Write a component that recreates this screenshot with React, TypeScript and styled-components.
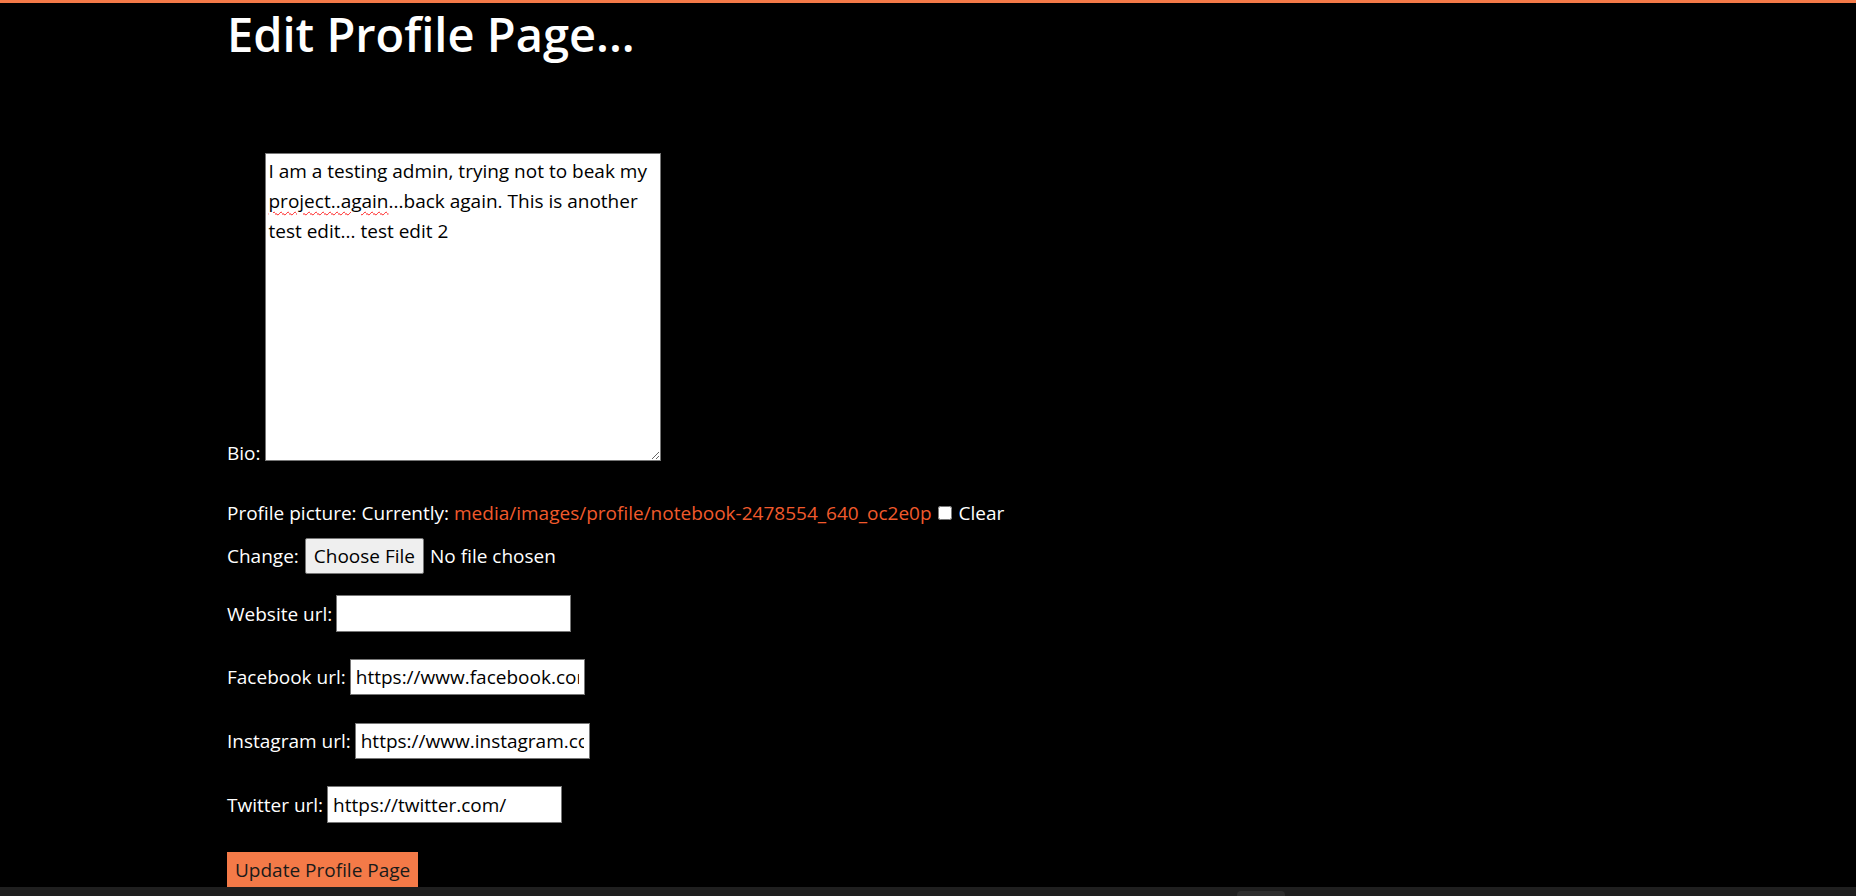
import React from "react";
import styled, { createGlobalStyle } from "styled-components";

const FONT = `"Open Sans", "Noto Sans", "Liberation Sans", sans-serif`;

const GlobalStyle = createGlobalStyle`
  html, body {
    margin: 0;
    padding: 0;
    background: #000;
  }
  body {
    font-family: ${FONT};
    color: #fff;
    font-size: 19px;
  }
  * { box-sizing: border-box; }
`;

const Page = styled.div`
  height: 100vh;
  display: flex;
  flex-direction: column;
  background: #000;
  overflow: hidden;
`;

const TopBar = styled.div`
  height: 3px;
  flex: none;
  background: #f47a48;
`;

const Main = styled.main`
  flex: 1;
  min-height: 0;
  overflow: hidden;
  padding-left: 227px;
`;

const Title = styled.h1`
  margin: 1px 0 0;
  font-size: 47px;
  line-height: 60px;
  font-weight: 600;
  color: #fff;
`;

const Form = styled.form`
  display: flex;
  flex-direction: column;
  align-items: flex-start;
`;

const Row = styled.div<{ $top: number; $align?: string; $gap?: number }>`
  display: flex;
  align-items: ${(p) => p.$align ?? "center"};
  gap: ${(p) => p.$gap ?? 4}px;
  margin-top: ${(p) => p.$top}px;
  line-height: 26px;
  white-space: nowrap;
`;

const Label = styled.label`
  color: #fff;
  line-height: 26px;
`;

const BioLabel = styled(Label)`
  line-height: 20px;
  margin-bottom: -2px;
`;

const BioBox = styled.div`
  width: 396px;
  height: 308px;
  background: #fff;
  color: #000;
  border: 1px solid #767676;
  padding: 2px 3px;
  font-size: 19px;
  line-height: 30px;
  resize: both;
  overflow: auto;
  white-space: normal;
  text-align: left;
  &::-webkit-scrollbar { display: none; }
`;

const Misspelled = styled.span`
  text-decoration: underline wavy #ff1a1a;
  text-decoration-thickness: 1px;
  text-underline-offset: 3px;
`;

const FileLink = styled.a`
  color: #f15a2c;
  text-decoration: none;
`;

const Check = styled.input`
  width: 14px;
  height: 14px;
  margin: 0 1px 0 0;
`;

const Inline = styled.span`
  display: inline-flex;
  align-items: center;
  gap: 6px;
`;

const FileButton = styled.button`
  height: 36px;
  padding: 0 8px;
  background: #efefef;
  color: #000;
  border: 1px solid #767676;
  border-radius: 2px;
  font-family: ${FONT};
  font-size: 19px;
  line-height: 26px;
`;

const TextInput = styled.input<{ $h?: number }>`
  width: 235px;
  height: ${(p) => p.$h ?? 36}px;
  padding: 0 5px;
  border: 1px solid #767676;
  border-radius: 0;
  background: #fff;
  color: #000;
  font-family: ${FONT};
  font-size: 19px;
  outline: none;
`;

const SubmitButton = styled.button`
  height: 36px;
  padding: 0 8px;
  background: #f47a48;
  color: #1a1a1a;
  border: none;
  border-radius: 0;
  font-family: ${FONT};
  font-size: 19px;
  line-height: 26px;
`;

const ScrollTrack = styled.div`
  height: 9px;
  flex: none;
  background: #1f1f1f;
  display: flex;
  align-items: flex-end;
  padding-left: 1237px;
`;

const ScrollThumb = styled.div`
  width: 48px;
  height: 5px;
  background: #2e2e2e;
  border-radius: 4px 4px 0 0;
`;

export default function App() {
  return (
    <>
      <GlobalStyle />
      <Page>
        <TopBar />
        <Main>
          <Title>Edit Profile Page...</Title>
          <Form onSubmit={(e) => e.preventDefault()}>
            <Row $top={89} $align="flex-end">
              <BioLabel htmlFor="bio">Bio:</BioLabel>
              <BioBox id="bio" role="textbox" aria-multiline="true">
                I am a testing admin, trying not to beak my{" "}
                <Misspelled>project..again</Misspelled>...back again. This is
                another test edit... test edit 2
              </BioBox>
            </Row>
            <Row $top={39} $gap={6}>
              <Label>
                Profile picture: Currently:{" "}
                <FileLink href="#">
                  media/images/profile/notebook-2478554_640_oc2e0p
                </FileLink>
              </Label>
              <Inline>
                <Check type="checkbox" id="clear" />
                <Label htmlFor="clear">Clear</Label>
              </Inline>
            </Row>
            <Row $top={12} $gap={6}>
              <Label>Change:</Label>
              <FileButton type="button">Choose File</FileButton>
              <span>No file chosen</span>
            </Row>
            <Row $top={21}>
              <Label htmlFor="website">Website url:</Label>
              <TextInput id="website" type="text" $h={37} defaultValue="" />
            </Row>
            <Row $top={27}>
              <Label htmlFor="facebook">Facebook url:</Label>
              <TextInput id="facebook" type="text" defaultValue="https://www.facebook.com/" />
            </Row>
            <Row $top={28}>
              <Label htmlFor="instagram">Instagram url:</Label>
              <TextInput id="instagram" type="text" defaultValue="https://www.instagram.com/" />
            </Row>
            <Row $top={27}>
              <Label htmlFor="twitter">Twitter url:</Label>
              <TextInput id="twitter" type="text" $h={37} defaultValue="https://twitter.com/" />
            </Row>
            <Row $top={29}>
              <SubmitButton type="submit">Update Profile Page</SubmitButton>
            </Row>
          </Form>
        </Main>
        <ScrollTrack>
          <ScrollThumb />
        </ScrollTrack>
      </Page>
    </>
  );
}
